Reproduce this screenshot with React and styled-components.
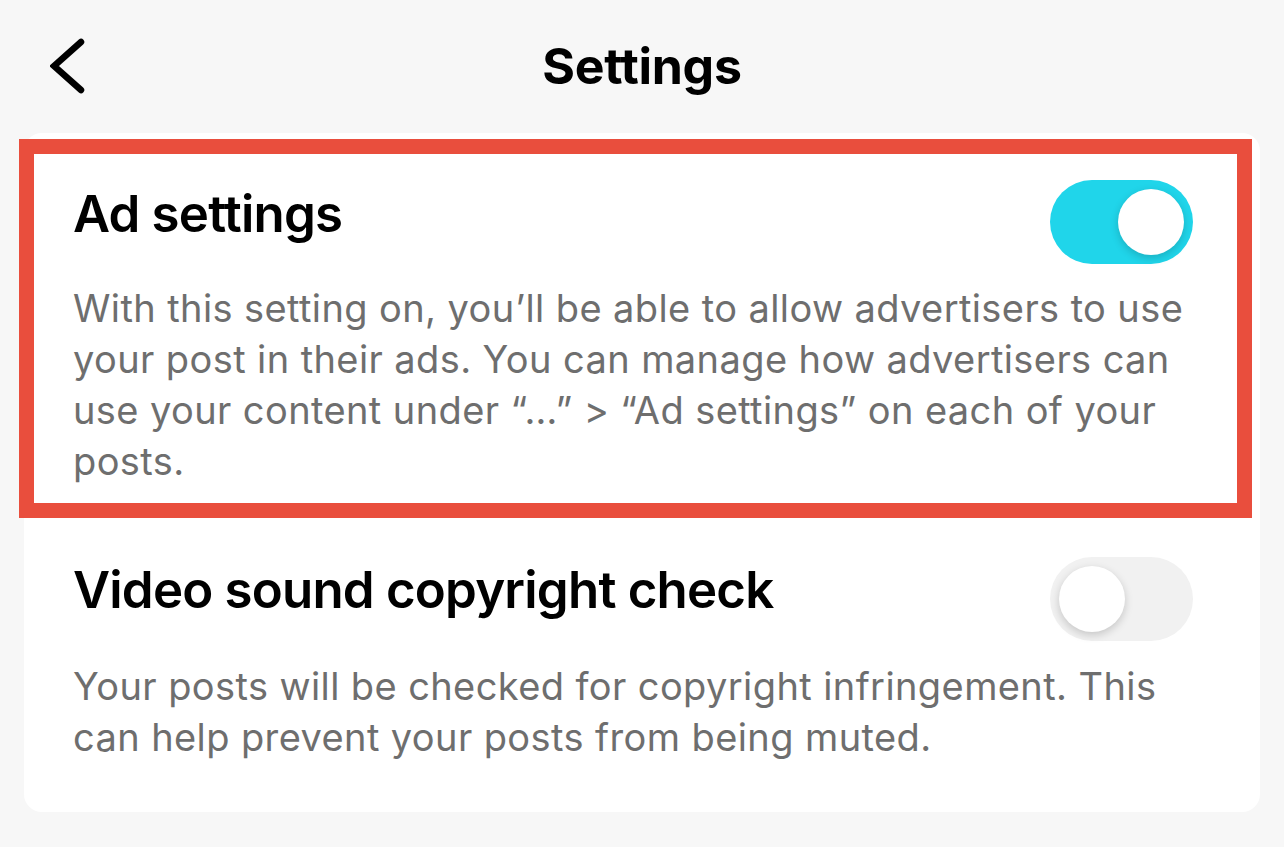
import styled, { createGlobalStyle } from "styled-components";

const GlobalStyle = createGlobalStyle`
  html, body {
    margin: 0;
    padding: 0;
    background: #f7f7f7;
  }
  body {
    font-family: Inter, "Noto Sans", "Liberation Sans", sans-serif;
    -webkit-font-smoothing: antialiased;
  }
`;

const Page = styled.div`
  width: 1284px;
  height: 847px;
  overflow: hidden;
  background: #f7f7f7;
`;

const Header = styled.header`
  display: grid;
  grid-template-columns: 1fr auto 1fr;
  align-items: center;
  height: 133px;
  padding: 0 50px;
  box-sizing: border-box;
`;

const BackButton = styled.button`
  justify-self: start;
  display: flex;
  padding: 0;
  border: none;
  background: none;
  margin-top: -1px;
`;

const Title = styled.h1`
  margin: 0;
  font-size: 50px;
  font-weight: 700;
  color: #000;
  letter-spacing: -0.3px;
  margin-top: -2px;
`;

const Card = styled.section`
  margin: 0 24px;
  background: #fff;
  border-radius: 18px;
  padding: 6px 0 49px;
`;

const Highlight = styled.div`
  border: 15px solid #e94e3d;
  margin: 0 8px 0 -5px;
`;

const Row = styled.div`
  padding: ${(p) => p.$pad};
`;

const TitleLine = styled.div`
  display: flex;
  align-items: flex-start;
  justify-content: space-between;
`;

const RowTitle = styled.div`
  font-size: 51px;
  font-weight: 600;
  line-height: 60px;
  color: #000;
  letter-spacing: -0.8px;
`;

const RowDesc = styled.p`
  margin: ${(p) => p.$gap}px 0 0;
  font-size: 38px;
  line-height: 51px;
  color: #6e6e6e;
  font-weight: 400;
  letter-spacing: 0.4px;
`;

const Toggle = styled.div`
  position: relative;
  flex: none;
  width: 143px;
  height: 84px;
  border-radius: 42px;
  background: ${(p) => (p.$on ? "#20d5ea" : "#f1f1f1")};
  margin-top: ${(p) => p.$top}px;
`;

const Knob = styled.span`
  position: absolute;
  top: 9px;
  left: ${(p) => (p.$on ? "68px" : "9px")};
  width: 66px;
  height: 66px;
  border-radius: 50%;
  background: #fff;
  box-shadow: 0 3px 8px rgba(0, 0, 0, 0.18);
`;

function Switch({ on, top }) {
  return (
    <Toggle $on={on} $top={top}>
      <Knob $on={on} />
    </Toggle>
  );
}

function SettingRow({ title, desc, on, pad, top, gap }) {
  return (
    <Row $pad={pad}>
      <TitleLine>
        <RowTitle>{title}</RowTitle>
        <Switch on={on} top={top} />
      </TitleLine>
      <RowDesc $gap={gap}>{desc}</RowDesc>
    </Row>
  );
}

export default function App() {
  return (
    <Page>
      <GlobalStyle />
      <Header>
        <BackButton aria-label="Back">
          <svg width="36" height="56" viewBox="0 0 36 56">
            <polyline
              points="31,4 4,28 31,52"
              fill="none"
              stroke="#000"
              strokeWidth="6.5"
              strokeLinecap="round"
              strokeLinejoin="miter"
            />
          </svg>
        </BackButton>
        <Title>Settings</Title>
        <span />
      </Header>
      <Card>
        <Highlight>
          <SettingRow
            title="Ad settings"
            on
            top={-4}
            gap={19}
            pad="30px 44px 16px 39px"
            desc="With this setting on, you’ll be able to allow advertisers to use your post in their ads. You can manage how advertisers can use your content under “…” > “Ad settings” on each of your posts."
          />
        </Highlight>
        <SettingRow
          title="Video sound copyright check"
          on={false}
          top={-3}
          gap={20}
          pad="42px 67px 0 49px"
          desc="Your posts will be checked for copyright infringement. This can help prevent your posts from being muted."
        />
      </Card>
    </Page>
  );
}
